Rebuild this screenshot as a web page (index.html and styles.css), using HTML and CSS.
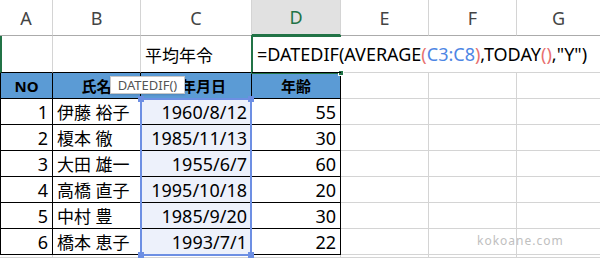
FILE: index.html
```html
<!DOCTYPE html>
<html lang="ja">

<head>
  <meta charset="UTF-8">
  <meta name="viewport" content="width=device-width, initial-scale=1.0">
  <title>平均年令</title>
  <link rel="stylesheet" href="styles.css">
</head>

<body>
  <div class="sheet">
    <!-- 列見出し -->
    <div class="col-h">A</div>
    <div class="col-h">B</div>
    <div class="col-h">C</div>
    <div class="col-h active">D</div>
    <div class="col-h">E</div>
    <div class="col-h">F</div>
    <div class="col-h last">G</div>

    <!-- 1行目 -->
    <div class="c first-a tt"></div>
    <div class="c tt"></div>
    <div class="c tt">平均年令</div>
    <div class="c tt open formula">=DATEDIF(AVERAGE<span class="red">(</span><span class="blue">C3:C8</span><span class="red">)</span>,TODAY<span class="red">()</span>,"Y")</div>
    <div class="c open"></div>
    <div class="c open"></div>
    <div class="c last"></div>

    <!-- 表見出し -->
    <div class="c t th first">NO</div>
    <div class="c t th">氏名</div>
    <div class="c t th">生年月日</div>
    <div class="c t th">年齢</div>
    <div class="c"></div>
    <div class="c"></div>
    <div class="c last"></div>

    <div class="c t first num">1</div>
    <div class="c t">伊藤 裕子</div>
    <div class="c t sel num">1960/8/12</div>
    <div class="c t num">55</div>
    <div class="c"></div>
    <div class="c"></div>
    <div class="c last"></div>

    <div class="c t first num">2</div>
    <div class="c t">榎本 徹</div>
    <div class="c t sel num">1985/11/13</div>
    <div class="c t num">30</div>
    <div class="c"></div>
    <div class="c"></div>
    <div class="c last"></div>

    <div class="c t first num">3</div>
    <div class="c t">大田 雄一</div>
    <div class="c t sel num">1955/6/7</div>
    <div class="c t num">60</div>
    <div class="c"></div>
    <div class="c"></div>
    <div class="c last"></div>

    <div class="c t first num">4</div>
    <div class="c t">高橋 直子</div>
    <div class="c t sel num">1995/10/18</div>
    <div class="c t num">20</div>
    <div class="c"></div>
    <div class="c"></div>
    <div class="c last"></div>

    <div class="c t first num">5</div>
    <div class="c t">中村 豊</div>
    <div class="c t sel num">1985/9/20</div>
    <div class="c t num">30</div>
    <div class="c"></div>
    <div class="c"></div>
    <div class="c last"></div>

    <div class="c t first num">6</div>
    <div class="c t">橋本 恵子</div>
    <div class="c t sel num">1993/7/1</div>
    <div class="c t num">22</div>
    <div class="c"></div>
    <div class="c"></div>
    <div class="c last"></div>

    <div class="c"></div>
    <div class="c"></div>
    <div class="c"></div>
    <div class="c"></div>
    <div class="c"></div>
    <div class="c"></div>
    <div class="c last"></div>

    <!-- 重なるもの -->
    <div class="active-cell"><span class="fill-handle"></span></div>
    <div class="range">
      <span class="handle tl"></span>
      <span class="handle tr"></span>
      <span class="handle bl"></span>
      <span class="handle br"></span>
    </div>
    <div class="tip">DATEDIF()</div>
    <div class="mark">kokoane.com</div>
  </div>
</body>

</html>
```

FILE: styles.css
```css
* {
  margin: 0;
  padding: 0;
  box-sizing: border-box;
}

html,
body {
  width: 100%;
  height: 100%;
  background: #fff;
  overflow: hidden;
}

body {
  font-family: "Noto Sans", "Noto Sans CJK JP", sans-serif;
  color: #000;
}

.sheet {
  position: relative;
  display: grid;
  grid-template-columns: 53px 88px 111px 89px 88px 88px 1fr;
  grid-template-rows: 36px 37px 26px 26px 26px 26px 26px 26px 26px 1fr;
  width: 600px;
  height: 258px;
}

.col-h {
  display: flex;
  justify-content: center;
  align-items: center;
  font-size: 18px;
  color: #444;
  border-right: 1px solid #d4d4d4;
  border-bottom: 1px solid #ababab;
}

.col-h.active {
  background: #e1e1e1;
  color: #217346;
  border-bottom: 2px solid #217346;
}

.c {
  display: flex;
  align-items: center;
  padding: 0 4px;
  font-size: 17px;
  white-space: nowrap;
  border-right: 1px solid #d4d4d4;
  border-bottom: 1px solid #d4d4d4;
}

.last {
  border-right: none;
}

.open {
  border-right: none;
}

.first-a {
  border-left: 2px solid #217346;
}

.tt {
  border-bottom-color: #000;
}

.formula {
  overflow: visible;
  font-size: 18px;
  padding-left: 5px;
  position: relative;
  z-index: 2;
}

.red {
  color: #e8706f;
}

.blue {
  color: #4e86e4;
}

.t {
  border-right-color: #000;
  border-bottom-color: #000;
}

.t.first {
  border-left: 1px solid #000;
}

.th {
  justify-content: center;
  background: #5b9bd5;
  font-size: 15px;
  font-weight: bold;
}

.num {
  justify-content: flex-end;
  font-size: 18px;
}

.sel {
  background: #edf1fb;
}

.active-cell {
  position: absolute;
  left: 251px;
  top: 35px;
  width: 90px;
  height: 39px;
  border: 2px solid #217346;
  border-right: none;
}

.fill-handle {
  position: absolute;
  right: -3px;
  bottom: -4px;
  width: 6px;
  height: 6px;
  background: #217346;
  border: 1px solid #fff;
}

.range {
  position: absolute;
  left: 140px;
  top: 98px;
  width: 112px;
  height: 158px;
  border: 2px solid #6d8fe3;
}

.handle {
  position: absolute;
  width: 6px;
  height: 6px;
  background: #6d8fe3;
}

.tl {
  left: -4px;
  top: -4px;
}

.tr {
  right: -4px;
  top: -4px;
}

.bl {
  left: -4px;
  bottom: -4px;
}

.br {
  right: -4px;
  bottom: -4px;
}

.tip {
  position: absolute;
  left: 110px;
  top: 76px;
  width: 75px;
  height: 18px;
  display: flex;
  justify-content: center;
  align-items: center;
  font-size: 13px;
  color: #555;
  background: #fff;
  border: 1px solid #c8c8c8;
  box-shadow: 0 1px 2px rgba(0, 0, 0, 0.15);
}

.mark {
  position: absolute;
  left: 477px;
  top: 232px;
  font-size: 12px;
  letter-spacing: 1px;
  color: #c0c0c0;
}
```
